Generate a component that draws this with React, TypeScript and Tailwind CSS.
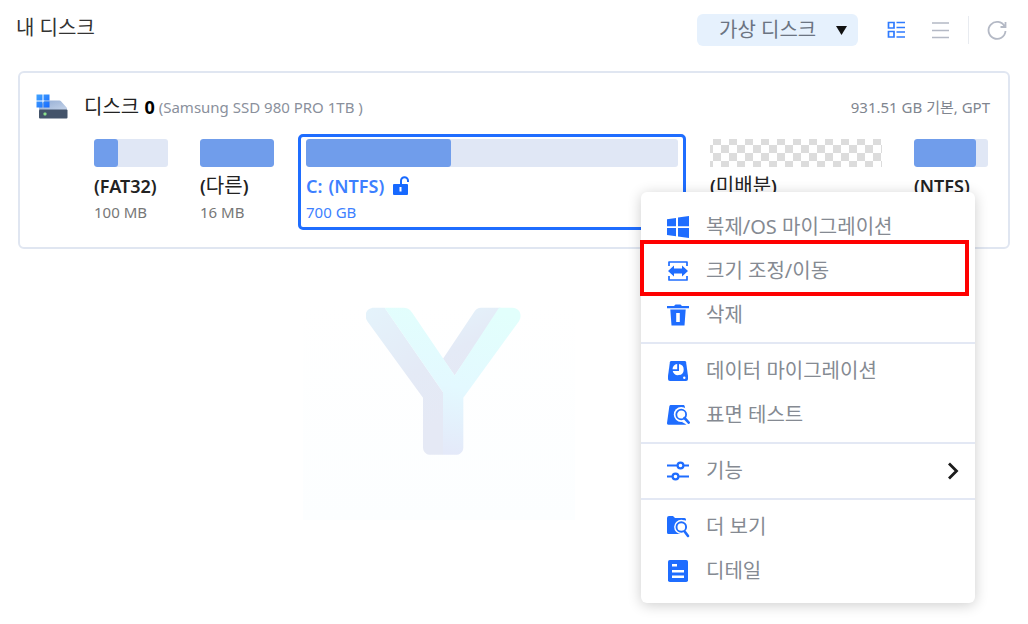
import React, { useState } from 'react';

interface Partition {
  id: string;
  fs: string;
  korean?: boolean;
  size?: string;
  used: number;
  kind: 'used' | 'free';
  width: string;
  locked?: boolean;
}

const partitions: Partition[] = [
  { id: 'p1', fs: 'FAT32', size: '100 MB', used: 33, kind: 'used', width: 'w-[90px]' },
  { id: 'p2', fs: '다른', korean: true, size: '16 MB', used: 100, kind: 'used', width: 'w-[90px]' },
  { id: 'p3', fs: 'NTFS', size: '700 GB', used: 39, kind: 'used', width: 'flex-1', locked: true },
  { id: 'p4', fs: '미배분', korean: true, used: 0, kind: 'free', width: 'w-[188px]' },
  { id: 'p5', fs: 'NTFS', used: 84, kind: 'used', width: 'w-[90px]' },
];

const svgProps = { width: 24, height: 24, viewBox: '0 0 24 24', fill: 'currentColor', 'aria-hidden': true } as const;

const WindowsIcon = () => (
  <svg {...svgProps}>
    <path d="M1 4.2 10 3v8.2H1zM12 2.6 23 1v10.2H12zM1 13h9v8.2L1 20zM12 13h11v10l-11-1.6z" />
  </svg>
);

const ResizeIcon = () => (
  <svg {...svgProps}>
    <path d="M3 7V3h18v4M3 17v4h18v-4" fill="none" stroke="currentColor" strokeWidth="1.7" strokeLinejoin="round" />
    <path d="m2 12 6-5.500v3h8v-3l6 5.500-6 5.500v-3H8v3z" />
  </svg>
);

const TrashIcon = () => (
  <svg {...svgProps}>
    <path d="M8 3 9.5 1.5h5L16 3h7v2.200H1V3z" />
    <path fillRule="evenodd" d="M4.3 6.5h15.4l-1.2 16H5.500zM10.200 10v9h3.600v-9z" />
  </svg>
);

const DataDiskIcon = () => (
  <svg {...svgProps}>
    <path d="M5.5 2h13c.9 0 1.4.5 1.6 1.3L22 17v3a2 2 0 0 1-2 2H4a2 2 0 0 1-2-2v-3L3.9 3.3C4.1 2.5 4.6 2 5.5 2z" />
    <path d="M13 5a5.600 5.600 0 1 1-6.300 7H13z" fill="#fff" />
    <path d="M11.200 5v5.200H6.500A5.600 5.600 0 0 1 11.200 5z" fill="#fff" />
    <circle cx="18.3" cy="18.7" r="1.2" fill="#fff" />
  </svg>
);

const SurfaceIcon = () => (
  <svg {...svgProps}>
    <path d="M5 2h12c1 0 1.5.4 1.7 1.3L21 17v3a1.8 1.8 0 0 1-1.8 1.8H2.5A1.5 1.5 0 0 1 1 20l2.3-16.5C3.5 2.5 4 2 5 2z" />
    <circle cx="15.2" cy="11.5" r="7.4" fill="#fff" />
    <path d="m19 15 5 4-1 4-7-4z" fill="#fff" />
    <circle cx="15.2" cy="11.5" r="4.9" fill="none" stroke="currentColor" strokeWidth="1.8" />
    <path d="m18.5 15 4.2 4.6" stroke="currentColor" strokeWidth="2.6" strokeLinecap="round" />
  </svg>
);

const SlidersIcon = () => (
  <svg {...svgProps} fill="none" stroke="currentColor" strokeWidth="2.2">
    <path d="M1 6.5h10.5M17.5 6.5H23M1 17.5h5.5M12.5 17.5H23" />
    <circle cx="14.5" cy="6.5" r="2.9" />
    <circle cx="9.5" cy="17.5" r="2.9" />
  </svg>
);

const FolderSearchIcon = () => (
  <svg {...svgProps}>
    <path d="M3 1h4l2 2h9.5A1.500 1.500 0 0 1 20 4.500V19H2.500A1.500 1.500 0 0 1 1 17.500V3a2 2 0 0 1 2-2z" />
    <circle cx="15.3" cy="12" r="7.2" fill="#fff" />
    <path d="M15 16h6v5h-6zM18 5.500h3V12h-3z" fill="#fff" />
    <circle cx="15.3" cy="12" r="4.8" fill="none" stroke="currentColor" strokeWidth="1.9" />
    <path d="m19 17 3 4" stroke="currentColor" strokeWidth="2.6" strokeLinecap="round" />
  </svg>
);

const DetailIcon = () => (
  <svg {...svgProps}>
    <rect x="2" y="1" width="20" height="22" rx="1.8" />
    <path d="M6 5h5v2.500H6zM6 11h12v2.500H6zM6 16.500h12V19H6z" fill="#fff" />
  </svg>
);

const DiskIcon = () => (
  <svg width="32" height="26" viewBox="0 0 32 26" aria-hidden="true">
    <defs>
      <linearGradient id="disk-top" x1="0" y1="0" x2="1" y2="1">
        <stop offset="0" stopColor="#93acd3" />
        <stop offset="1" stopColor="#c3d2e8" />
      </linearGradient>
      <linearGradient id="disk-win" x1="0" y1="0" x2="1" y2="1">
        <stop offset="0" stopColor="#42a5ff" />
        <stop offset="1" stopColor="#1769ff" />
      </linearGradient>
    </defs>
    <path d="M9 6.500h14.500a2 2 0 0 1 1.500.7L31 14v2H3v-3z" fill="url(#disk-top)" />
    <rect x="3" y="15.500" width="28.500" height="9" rx="1" fill="#43536a" />
    <rect x="7.500" y="18.500" width="3" height="3" rx="1" fill="#8be08b" />
    <path d="M.5.500h6v6h-6zM7.500.500h6v6h-6zM.5 7.500h6v6h-6zM7.500 7.500h6v6h-6z" fill="url(#disk-win)" />
  </svg>
);

const UnlockIcon = () => (
  <svg width="18" height="20" viewBox="0 0 18 20" aria-hidden="true">
    <path d="M9 8.500V4.800a3.500 3.500 0 0 1 7 0V6" fill="none" stroke="#1769ff" strokeWidth="2" />
    <path fillRule="evenodd" d="M2 8h13a1 1 0 0 1 1 1v9a1 1 0 0 1-1 1H2a1 1 0 0 1-1-1V9a1 1 0 0 1 1-1zM7.500 11v4.500h2V11z" fill="#1769ff" />
  </svg>
);

const menuGroups = [
  [
    { label: '복제/OS 마이그레이션', Icon: WindowsIcon },
    { label: '크기 조정/이동', Icon: ResizeIcon, marked: true },
    { label: '삭제', Icon: TrashIcon },
  ],
  [
    { label: '데이터 마이그레이션', Icon: DataDiskIcon },
    { label: '표면 테스트', Icon: SurfaceIcon },
  ],
  [{ label: '기능', Icon: SlidersIcon, submenu: true }],
  [
    { label: '더 보기', Icon: FolderSearchIcon },
    { label: '디테일', Icon: DetailIcon },
  ],
] as { label: string; Icon: () => React.JSX.Element; marked?: boolean; submenu?: boolean }[][];

function Toolbar({ view, onView }: { view: string; onView: (v: string) => void }) {
  return (
    <header className="flex items-start justify-between pt-3.5 pr-5 pl-4">
      <h1 className="text-xl leading-7 text-[#333]">내 디스크</h1>
      <div className="flex items-center">
        <div className="relative">
          <select aria-label="디스크 종류" className="h-8 w-[161px] appearance-none rounded-md bg-[#e6f1fd] pl-[22px] text-xl leading-8 text-[#6b7482]">
            <option>가상 디스크</option>
          </select>
          <svg width="11" height="9" viewBox="0 0 11 9" className="pointer-events-none absolute top-3 right-[11px]" aria-hidden="true">
            <path d="M0 0h11L5.500 9z" fill="#111" />
          </svg>
        </div>
        <button type="button" aria-label="카드 보기" onClick={() => onView('card')} className={view === 'card' ? 'ml-7 text-[#2f7bff]' : 'ml-7 text-[#b4b9c5]'}>
          <svg width="20" height="20" viewBox="0 0 20 20" fill="none" stroke="currentColor" strokeWidth="1.7" aria-hidden="true">
            <path d="M2.500 2.500h5.500v5.500H2.500zM2.500 11.500h5.500v5.500H2.500zM10.500 2.500H19M10.500 7.500H19M10.500 12H19M10.500 17H19" />
          </svg>
        </button>
        <button type="button" aria-label="목록 보기" onClick={() => onView('list')} className={view === 'list' ? 'ml-6 text-[#2f7bff]' : 'ml-6 text-[#b4b9c5]'}>
          <svg width="20" height="20" viewBox="0 0 20 20" fill="none" stroke="currentColor" strokeWidth="1.5" aria-hidden="true">
            <path d="M2 3h17M2 10.500h17M2 17.500h17" />
          </svg>
        </button>
        <span className="ml-[18px] h-7 w-px bg-[#e8ebf0]" />
        <button type="button" aria-label="새로 고침" className="ml-[17px] text-[#b4b9c5]">
          <svg width="22" height="22" viewBox="0 0 22 22" fill="none" stroke="currentColor" strokeWidth="1.8" aria-hidden="true">
            <path d="M18.600 7.500A8.500 8.500 0 1 0 19.500 12M19.500 3v5h-5" />
          </svg>
        </button>
      </div>
    </header>
  );
}

function PartitionBlock({ p, selected, onSelect }: { p: Partition; selected: boolean; onSelect: () => void }) {
  return (
    <button
      type="button"
      onClick={onSelect}
      className={`${p.width} flex min-w-0 flex-col items-stretch justify-start rounded-[5px] border-[3px] px-[5px] pt-[2px] pb-[3px] text-left whitespace-nowrap ${selected ? 'border-[#1f6dff] text-[#3d7fff]' : 'border-transparent text-[#222]'}`}
    >
      {p.kind === 'free' ? (
        <span className="block h-7 bg-[repeating-conic-gradient(#dcdcdc_0_25%,#fff_0_50%)] bg-[length:16px_16px] bg-[position:3px_6px]" />
      ) : (
        <span className="block h-7 overflow-hidden rounded-[3px] bg-[#e0e7f5]">
          <span className="block h-full rounded-[3px] bg-[#709deb]" style={{ width: `${p.used}%` }} />
        </span>
      )}
      <span className="mt-[5px] flex h-7 items-center text-lg leading-7 font-semibold">
        {p.locked && <span className="mr-1.5">C:</span>}
        <span>({p.korean ? <span className="text-xl leading-7 font-normal">{p.fs}</span> : p.fs})</span>
        {p.locked && <span className="ml-2"><UnlockIcon /></span>}
      </span>
      {p.size && <span className={`block text-[15px] leading-6 ${selected ? '' : 'text-[#777]'}`}>{p.size}</span>}
    </button>
  );
}

function ContextMenu() {
  return (
    <div className="absolute top-[192px] left-[641px] w-[334px] rounded-md bg-white pt-[13px] pb-2.5 shadow-[0_2px_14px_rgba(0,0,0,0.2)]">
      {menuGroups.map((group, i) => (
        <ul key={i} className={i > 0 ? 'mt-[5px] border-t-2 border-[#e3e8f4] pt-[5px]' : ''}>
          {group.map(({ label, Icon, marked, submenu }) => (
            <li key={label} className="relative">
              <button type="button" className="flex h-11 w-full items-center pr-4 pl-[25px] text-left text-xl text-[#858a92]">
                <span className="text-[#1f6dff]"><Icon /></span>
                <span className="ml-4 flex-1">{label}</span>
                {submenu && (
                  <svg width="12" height="18" viewBox="0 0 12 18" fill="none" stroke="#1c1c1c" strokeWidth="2.8" aria-hidden="true">
                    <path d="m2 1.500 7.500 7.500L2 16.500" />
                  </svg>
                )}
              </button>
              {marked && <span className="pointer-events-none absolute -top-[9px] right-1.5 -bottom-[3px] -left-px border-4 border-[#fe0000]" />}
            </li>
          ))}
        </ul>
      ))}
    </div>
  );
}

function Emblem() {
  return (
    <div className="mt-[52px] ml-[303px] w-[272px] bg-linear-to-b from-white to-[#fcfeff] pt-[6px] pb-16 pl-[63px]">
      <svg width="156" height="149" viewBox="229 50 468 446" aria-hidden="true">
        <defs>
          <linearGradient id="fold-shade" x1="0" y1="0" x2="0.4" y2="1">
            <stop offset="0" stopColor="#e4f3fb" />
            <stop offset="0.6" stopColor="#e4eaf6" />
            <stop offset="1" stopColor="#e5e9f5" />
          </linearGradient>
          <linearGradient id="fold-light" x1="0.7" y1="0" x2="0.5" y2="1">
            <stop offset="0" stopColor="#e2fffc" />
            <stop offset="0.55" stopColor="#e3f9ff" />
            <stop offset="1" stopColor="#e4e9f9" />
          </linearGradient>
        </defs>
        <path d="M285 52h-32c-22 0-32 22-20 40l167 230v148c0 14 10 23 24 23h36V305z" fill="url(#fold-shade)" />
        <path d="M575 52h58L495 255l-35-50 92-138c6-10 12-15 23-15z" fill="url(#fold-shade)" />
        <path d="M285 52h56c11 0 19 4 26 14l128 189L628 52h40c22 0 31 22 20 40L521 322v148c0 14-10 23-24 23h-37V305z" fill="url(#fold-light)" />
      </svg>
    </div>
  );
}

export default function App() {
  const [view, setView] = useState('card');
  const [selected, setSelected] = useState('p3');

  return (
    <main className="relative min-h-screen overflow-hidden bg-white font-['Noto_Sans','Noto_Sans_CJK_KR',sans-serif]">
      <Toolbar view={view} onView={setView} />

      <section className="mt-[25px] mr-[18px] ml-[18px] rounded-md border-2 border-[#e0e6f1] pt-4 pb-[17px]">
        <div className="flex h-9 items-center pr-[18px] pl-4">
          <DiskIcon />
          <h2 className="ml-4 text-xl text-[#222]">
            디스크 <span className="text-lg font-bold text-black">0</span>
          </h2>
          <span className="ml-1 text-[15px] text-[#8a909c]">(Samsung SSD 980 PRO 1TB )</span>
          <span className="ml-auto text-[15px] text-[#80858f]">931.51 GB 기본, GPT</span>
        </div>
        <div className="mt-[9px] flex gap-4 pr-3 pl-[66px]">
          {partitions.map((p) => (
            <PartitionBlock key={p.id} p={p} selected={selected === p.id} onSelect={() => setSelected(p.id)} />
          ))}
        </div>
      </section>

      <Emblem />
      <ContextMenu />
    </main>
  );
}
